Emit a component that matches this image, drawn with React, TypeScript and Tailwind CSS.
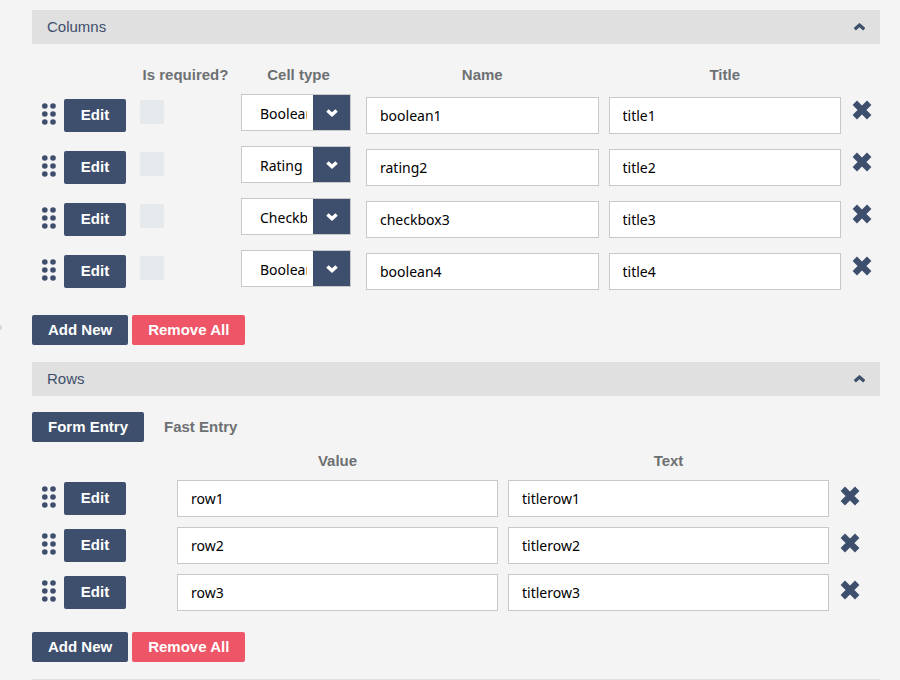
import React from "react";

const columns = [
  { type: "Boolean", name: "boolean1", title: "title1" },
  { type: "Rating", name: "rating2", title: "title2" },
  { type: "Checkbox", name: "checkbox3", title: "title3" },
  { type: "Boolean", name: "boolean4", title: "title4" },
];

const rows = [
  { value: "row1", text: "titlerow1" },
  { value: "row2", text: "titlerow2" },
  { value: "row3", text: "titlerow3" },
];

const cellTypes = ["Boolean", "Rating", "Checkbox", "Dropdown", "Text", "Comment"];

const fieldClass =
  "block h-[37px] w-full rounded-none border border-[#c8c8c8] bg-white px-[13px] font-['Noto_Sans',sans-serif] text-[14px] text-black outline-none";

function DragHandle() {
  return (
    <svg width="14" height="22" viewBox="0 0 14 22" fill="#3d4f6c" aria-hidden="true">
      {[3, 11, 19].map((y) => (
        <g key={y}>
          <circle cx="2.8" cy={y} r="2.8" />
          <circle cx="11" cy={y} r="2.8" />
        </g>
      ))}
    </svg>
  );
}

function Actions() {
  return (
    <div className="flex gap-2 pl-[10px]">
      <span className="pt-1">
        <DragHandle />
      </span>
      <button type="button" className="h-[33px] w-[62px] rounded-[2px] bg-[#3d4f6c] text-[15px] font-bold text-white">
        Edit
      </button>
    </div>
  );
}

function RemoveButton({ label }: { label: string }) {
  return (
    <button type="button" aria-label={label} className="block">
      <svg width="20" height="20" viewBox="0 0 20 20" fill="none" stroke="#3d4f6c" strokeWidth="6.2">
        <path d="M2.8 2.8L17.2 17.2M17.2 2.8L2.8 17.2" />
      </svg>
    </button>
  );
}

function SectionHeader({ title }: { title: string }) {
  return (
    <h2 className="text-[15px] leading-[34px] text-[#3d4f6c]">
      <button type="button" aria-expanded="true" className="flex w-full items-center justify-between bg-[#e0e0e0] px-[15px]">
        {title}
        <svg width="12" height="8" viewBox="0 0 12 8" fill="none" stroke="#3d4f6c" strokeWidth="3.2">
          <path d="M1.8 6.3L6.5 2L11.2 6.3" />
        </svg>
      </button>
    </h2>
  );
}

function Footer() {
  return (
    <div className="flex gap-1 text-[15px] font-bold text-white">
      <button type="button" className="h-[30px] rounded-[2px] bg-[#3d4f6c] px-4">
        Add New
      </button>
      <button type="button" className="h-[30px] rounded-[2px] bg-[#ee5566] px-4">
        Remove All
      </button>
    </div>
  );
}

export default function App() {
  return (
    <main className="relative min-h-screen bg-[#f4f4f4] pt-[10px] pr-5 pl-8 font-['Liberation_Sans',Arial,sans-serif] text-[15px] text-[#6d7072]">
      <span className="absolute top-[325px] left-[-3px] h-[5px] w-[5px] rounded-full bg-[#d4d4d4]" />
      <section>
        <SectionHeader title="Columns" />
        <table className="mt-[18px] w-full table-fixed">
          <colgroup>
            <col className="w-[103px]" />
            <col className="w-[101px]" />
            <col className="w-[125px]" />
            <col />
            <col />
            <col className="w-[34px]" />
          </colgroup>
          <thead>
            <tr className="h-[26px]">
              <td />
              <th className="whitespace-nowrap">Is required?</th>
              <th>Cell type</th>
              <th>Name</th>
              <th>Title</th>
              <td />
            </tr>
          </thead>
          <tbody>
            {columns.map((c) => (
              <tr key={c.name} className="h-[52px] align-top">
                <td className="pt-[11px]">
                  <Actions />
                </td>
                <td className="px-[5px] pt-3">
                  <input
                    type="checkbox"
                    aria-label={`${c.name} is required`}
                    className="block h-6 w-6 appearance-none bg-[#e7eaec]"
                  />
                </td>
                <td className="px-[5px] pt-[6px]">
                  <div className="grid h-[37px] w-[110px] border border-[#c8c8c8] bg-white">
                    <select
                      defaultValue={c.type}
                      aria-label={`${c.name} cell type`}
                      className="col-start-1 row-start-1 w-full appearance-none pt-px pr-[43px] pl-[18px] font-['Noto_Sans',sans-serif] text-[14px] text-black outline-none"
                    >
                      {cellTypes.map((t) => (
                        <option key={t}>{t}</option>
                      ))}
                    </select>
                    <span className="pointer-events-none col-start-1 row-start-1 flex w-[37px] items-center justify-center justify-self-end bg-[#3d4f6c]">
                      <svg width="12" height="8" viewBox="0 0 12 8" fill="none" stroke="#fff" strokeWidth="3.4">
                        <path d="M1.4 1.4L6 5.6L10.6 1.4" />
                      </svg>
                    </span>
                  </div>
                </td>
                <td className="px-[5px] pt-[9px]">
                  <input type="text" aria-label="Name" defaultValue={c.name} className={fieldClass} />
                </td>
                <td className="px-[5px] pt-[9px]">
                  <input type="text" aria-label="Title" defaultValue={c.title} className={fieldClass} />
                </td>
                <td className="pt-3 pl-[6px]">
                  <RemoveButton label={`Remove ${c.name}`} />
                </td>
              </tr>
            ))}
          </tbody>
        </table>
        <div className="mt-[19px]">
          <Footer />
        </div>
      </section>

      <section className="mt-[17px]">
        <SectionHeader title="Rows" />
        <div className="mt-4 flex gap-1 font-bold">
          <button type="button" className="h-[30px] rounded-[2px] bg-[#3d4f6c] px-4 text-white">
            Form Entry
          </button>
          <button type="button" className="h-[30px] px-4">
            Fast Entry
          </button>
        </div>
        <table className="mt-[6px] w-full table-fixed">
          <colgroup>
            <col className="w-[140px]" />
            <col />
            <col />
            <col className="w-[46px]" />
          </colgroup>
          <thead>
            <tr className="h-[26px]">
              <td />
              <th>Value</th>
              <th>Text</th>
              <td />
            </tr>
          </thead>
          <tbody>
            {rows.map((r) => (
              <tr key={r.value} className="h-[47px] align-top">
                <td className="pt-2">
                  <Actions />
                </td>
                <td className="px-[5px] pt-[6px]">
                  <input type="text" aria-label="Value" defaultValue={r.value} className={fieldClass} />
                </td>
                <td className="px-[5px] pt-[6px]">
                  <input type="text" aria-label="Text" defaultValue={r.text} className={fieldClass} />
                </td>
                <td className="pt-3 pl-[6px]">
                  <RemoveButton label={`Remove ${r.value}`} />
                </td>
              </tr>
            ))}
          </tbody>
        </table>
        <div className="mt-[17px]">
          <Footer />
        </div>
      </section>
      <hr className="mt-[17px] border-[#e0e0e0]" />
    </main>
  );
}
